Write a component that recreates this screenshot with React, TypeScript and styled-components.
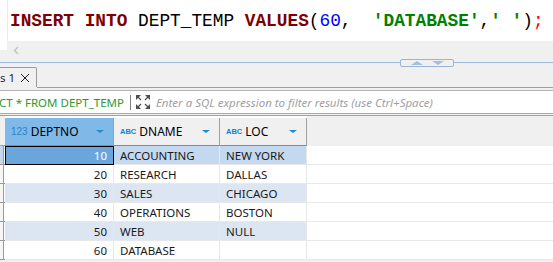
import { createGlobalStyle, styled } from "styled-components";

const GlobalStyle = createGlobalStyle`
  html, body {
    margin: 0;
    padding: 0;
    background: #f0f0f0;
    overflow: hidden;
  }
  body {
    font-family: "Noto Sans", "Open Sans", sans-serif;
    font-size: 11.5px;
    color: #1e1e1e;
  }
`;

const Page = styled.div`
  width: 553px;
  height: 262px;
  display: flex;
  flex-direction: column;
  background: #f0f0f0;
  overflow: hidden;
`;

// sql editor
const Editor = styled.div`
  height: 41px;
  display: flex;
  background: #fff;
`;

const Gutter = styled.div`
  width: 7px;
  border-right: 1px solid #ececec;
  background: #fff;
`;

const CodeLine = styled.div`
  padding: 11px 0 0 2px;
  line-height: 20px;
  font-family: "Liberation Mono", "Courier New", monospace;
  font-size: 17.8px;
  white-space: pre;
  color: #000;
`;

const Tok = styled.span<{ $kind?: "kw" | "num" | "str" | "err" }>`
  color: ${(p) =>
    p.$kind === "kw"
      ? "#7f0000"
      : p.$kind === "num"
      ? "#0000ff"
      : p.$kind === "str"
      ? "#008000"
      : p.$kind === "err"
      ? "#ff0000"
      : "#000"};
  font-weight: ${(p) => (p.$kind === "kw" || p.$kind === "str" ? 700 : 400)};
`;

const HScroll = styled.div`
  height: 17px;
  display: flex;
  align-items: flex-start;
`;

const Corner = styled.div`
  width: 7px;
  height: 9px;
  background: #fff;
`;

const ScrollArrow = styled.div`
  margin: 5px 0 0 6px;
  display: flex;
`;

const Splitter = styled.div`
  height: 9px;
  display: flex;
  align-items: center;
`;

const SplitLine = styled.div<{ $w?: number }>`
  height: 1px;
  background: #9fb8d8;
  flex: ${(p) => (p.$w ? `0 0 ${p.$w}px` : "1")};
`;

const SplitHandle = styled.div`
  width: 52px;
  height: 6px;
  border: 1px solid #9ab4d4;
  border-radius: 2px;
  display: flex;
  align-items: center;
  justify-content: center;
  gap: 9px;
  margin-top: 1px;
`;

const Tri = styled.div<{ $down?: boolean; $color?: string; $w?: number }>`
  width: 0;
  height: 0;
  border-left: ${(p) => (p.$w ?? 12) / 2}px solid transparent;
  border-right: ${(p) => (p.$w ?? 12) / 2}px solid transparent;
  ${(p) =>
    p.$down
      ? `border-top: ${(p.$w ?? 12) / 3}px solid ${p.$color ?? "#a6bedc"};`
      : `border-bottom: ${(p.$w ?? 12) / 3}px solid ${p.$color ?? "#a6bedc"};`}
`;

// result tabs
const TabStrip = styled.div`
  height: 21px;
  display: flex;
`;

const Tab = styled.div`
  width: 37px;
  height: 20px;
  box-sizing: border-box;
  border-top: 1px solid #9a9a9a;
  border-right: 1px solid #9a9a9a;
  border-top-right-radius: 2px;
  display: flex;
  align-items: center;
  justify-content: space-between;
  padding-right: 6px;
  color: #1e1e3c;
`;

const TabRest = styled.div`
  flex: 1;
  border-bottom: 1px solid #a0a0a0;
`;

const FilterBox = styled.div`
  margin-top: 2px;
  height: 22px;
  border-top: 1px solid #b4b4b4;
  border-bottom: 1px solid #a8a8a8;
  background: #fff;
  display: flex;
  align-items: center;
  white-space: nowrap;
`;

const QueryText = styled.span`
  color: #2e9a2e;
  margin-left: -1px;
`;

const Sep = styled.div`
  width: 1px;
  height: 15px;
  background: #808080;
  margin: 0 5px 0 6px;
`;

const Placeholder = styled.span`
  color: #a0a0a0;
  font-style: italic;
  margin-left: 6px;
`;

// data grid
const Grid = styled.div`
  margin-top: 1px;
  border-top: 1px solid #a0a0a0;
  display: grid;
  grid-template-columns: 5px 109px 106px 87px 1fr;
  grid-template-rows: 30px;
  grid-auto-rows: 19px;
  background: #fff;
`;

const HeadStrip = styled.div`
  box-sizing: border-box;
  background: #f0f0f0;
  border-bottom: 1px solid #a0a0a0;
`;

const HeadCell = styled.div<{ $active?: boolean }>`
  box-sizing: border-box;
  margin-top: 2px;
  background: ${(p) => (p.$active ? "#80b8e8" : "#f0f0f0")};
  border-right: 1px solid #a0a0a0;
  border-bottom: 1px solid #8a8a8a;
  display: flex;
  align-items: center;
  padding: 0 9px 0 6px;
  color: #000;
  font-size: 12px;
`;

const HeadFill = styled.div`
  background: #f0f0f0;
`;

const HeadTitle = styled.span`
  flex: 1;
  display: flex;
  align-items: center;
`;

const TypeNum = styled.span`
  color: #2a86c6;
  font-family: "Liberation Sans", sans-serif;
  font-size: 10px;
  margin-right: 3px;
`;

const TypeStr = styled.span`
  color: #1580d0;
  font-family: "Liberation Sans", sans-serif;
  font-weight: 700;
  font-size: 7.5px;
  margin-right: 3px;
`;

const RowStrip = styled.div<{ $sel?: boolean }>`
  background: linear-gradient(
    to right,
    ${(p) => (p.$sel ? "#c4d9ef" : "#f6f6f6")} 0 3px,
    #9a9a9a 3px 4px,
    #fff 4px
  );
  border-bottom: 1px solid #9a9a9a;
  box-sizing: border-box;
`;

const Cell = styled.div<{ $bg?: string; $num?: boolean; $focus?: boolean }>`
  box-sizing: border-box;
  background: ${(p) => p.$bg ?? "#fff"};
  border-right: 1px solid #e8e8e8;
  border-bottom: 1px solid #e8e8e8;
  padding: 0 6px;
  display: flex;
  align-items: center;
  justify-content: ${(p) => (p.$num ? "flex-end" : "flex-start")};
  color: ${(p) => (p.$focus ? "#fff" : "#1a1a1a")};
  white-space: nowrap;
  ${(p) => (p.$focus ? "outline: 1px solid #000; outline-offset: -1px;" : "")}
`;

const FillCell = styled.div`
  border-bottom: 1px solid #e8e8e8;
`;

const ExpandIcon = () => (
  <svg width="14" height="14" viewBox="0 0 14 14" fill="#505050" stroke="#505050" strokeWidth="1.2">
    <polygon points="0,0 5,0 0,5" stroke="none" />
    <line x1="1.5" y1="1.5" x2="5" y2="5" />
    <polygon points="14,0 9,0 14,5" stroke="none" />
    <line x1="12.5" y1="1.5" x2="9" y2="5" />
    <polygon points="0,14 5,14 0,9" stroke="none" />
    <line x1="1.5" y1="12.5" x2="5" y2="9" />
    <polygon points="14,14 9,14 14,9" stroke="none" />
    <line x1="12.5" y1="12.5" x2="9" y2="9" />
  </svg>
);

const rows = [
  { no: 10, name: "ACCOUNTING", loc: "NEW YORK" },
  { no: 20, name: "RESEARCH", loc: "DALLAS" },
  { no: 30, name: "SALES", loc: "CHICAGO" },
  { no: 40, name: "OPERATIONS", loc: "BOSTON" },
  { no: 50, name: "WEB", loc: "NULL" },
  { no: 60, name: "DATABASE", loc: "" },
];

export default function App() {
  return (
    <>
      <GlobalStyle />
      <Page>
        <Editor>
          <Gutter />
          <CodeLine>
            <Tok $kind="kw">INSERT</Tok>{" "}
            <Tok $kind="kw">INTO</Tok>{" "}
            <Tok>DEPT_TEMP</Tok>{" "}
            <Tok $kind="kw">VALUES</Tok>
            <Tok>(</Tok>
            <Tok $kind="num">60</Tok>
            <Tok>{",  "}</Tok>
            <Tok $kind="str">'DATABASE'</Tok>
            <Tok>,</Tok>
            <Tok $kind="str">' '</Tok>
            <Tok>)</Tok>
            <Tok $kind="err">;</Tok>
          </CodeLine>
        </Editor>
        <HScroll>
          <Corner />
          <ScrollArrow>
            <svg width="6" height="9" viewBox="0 0 6 9">
              <polyline points="5,1 1.5,4.5 5,8" fill="none" stroke="#c4c4c4" strokeWidth="1.5" />
            </svg>
          </ScrollArrow>
        </HScroll>
        <Splitter>
          <SplitLine $w={400} />
          <SplitHandle>
            <Tri $w={12} />
            <Tri $w={12} $down />
          </SplitHandle>
          <SplitLine />
        </Splitter>
        <TabStrip>
          <Tab>
            <span>s 1</span>
            <svg width="10" height="10" viewBox="0 0 10 10">
              <path d="M1 1L9 9M9 1L1 9" stroke="#202020" strokeWidth="1" />
            </svg>
          </Tab>
          <TabRest />
        </TabStrip>
        <FilterBox>
          <QueryText>CT * FROM DEPT_TEMP</QueryText>
          <Sep />
          <ExpandIcon />
          <Placeholder>Enter a SQL expression to filter results (use Ctrl+Space)</Placeholder>
        </FilterBox>
        <Grid>
          <HeadStrip />
          <HeadCell $active>
            <HeadTitle>
              <TypeNum>123</TypeNum>DEPTNO
            </HeadTitle>
            <Tri $w={9} $down $color="#1a8ad4" />
          </HeadCell>
          <HeadCell>
            <HeadTitle>
              <TypeStr>ABC</TypeStr>DNAME
            </HeadTitle>
            <Tri $w={9} $down $color="#1a8ad4" />
          </HeadCell>
          <HeadCell>
            <HeadTitle>
              <TypeStr>ABC</TypeStr>LOC
            </HeadTitle>
            <Tri $w={9} $down $color="#1a8ad4" />
          </HeadCell>
          <HeadFill />
          {rows.map((r, i) => {
            const sel = i === 0;
            const bg = sel ? "#c4d9ef" : i % 2 === 0 ? "#dce6f2" : "#fff";
            return [
              <RowStrip key={`s${i}`} $sel={sel} />,
              <Cell key={`a${i}`} $num $bg={sel ? "#6aa6dc" : bg} $focus={sel}>
                {r.no}
              </Cell>,
              <Cell key={`b${i}`} $bg={bg}>
                {r.name}
              </Cell>,
              <Cell key={`c${i}`} $bg={bg}>
                {r.loc}
              </Cell>,
              <FillCell key={`d${i}`} />,
            ];
          })}
        </Grid>
      </Page>
    </>
  );
}
